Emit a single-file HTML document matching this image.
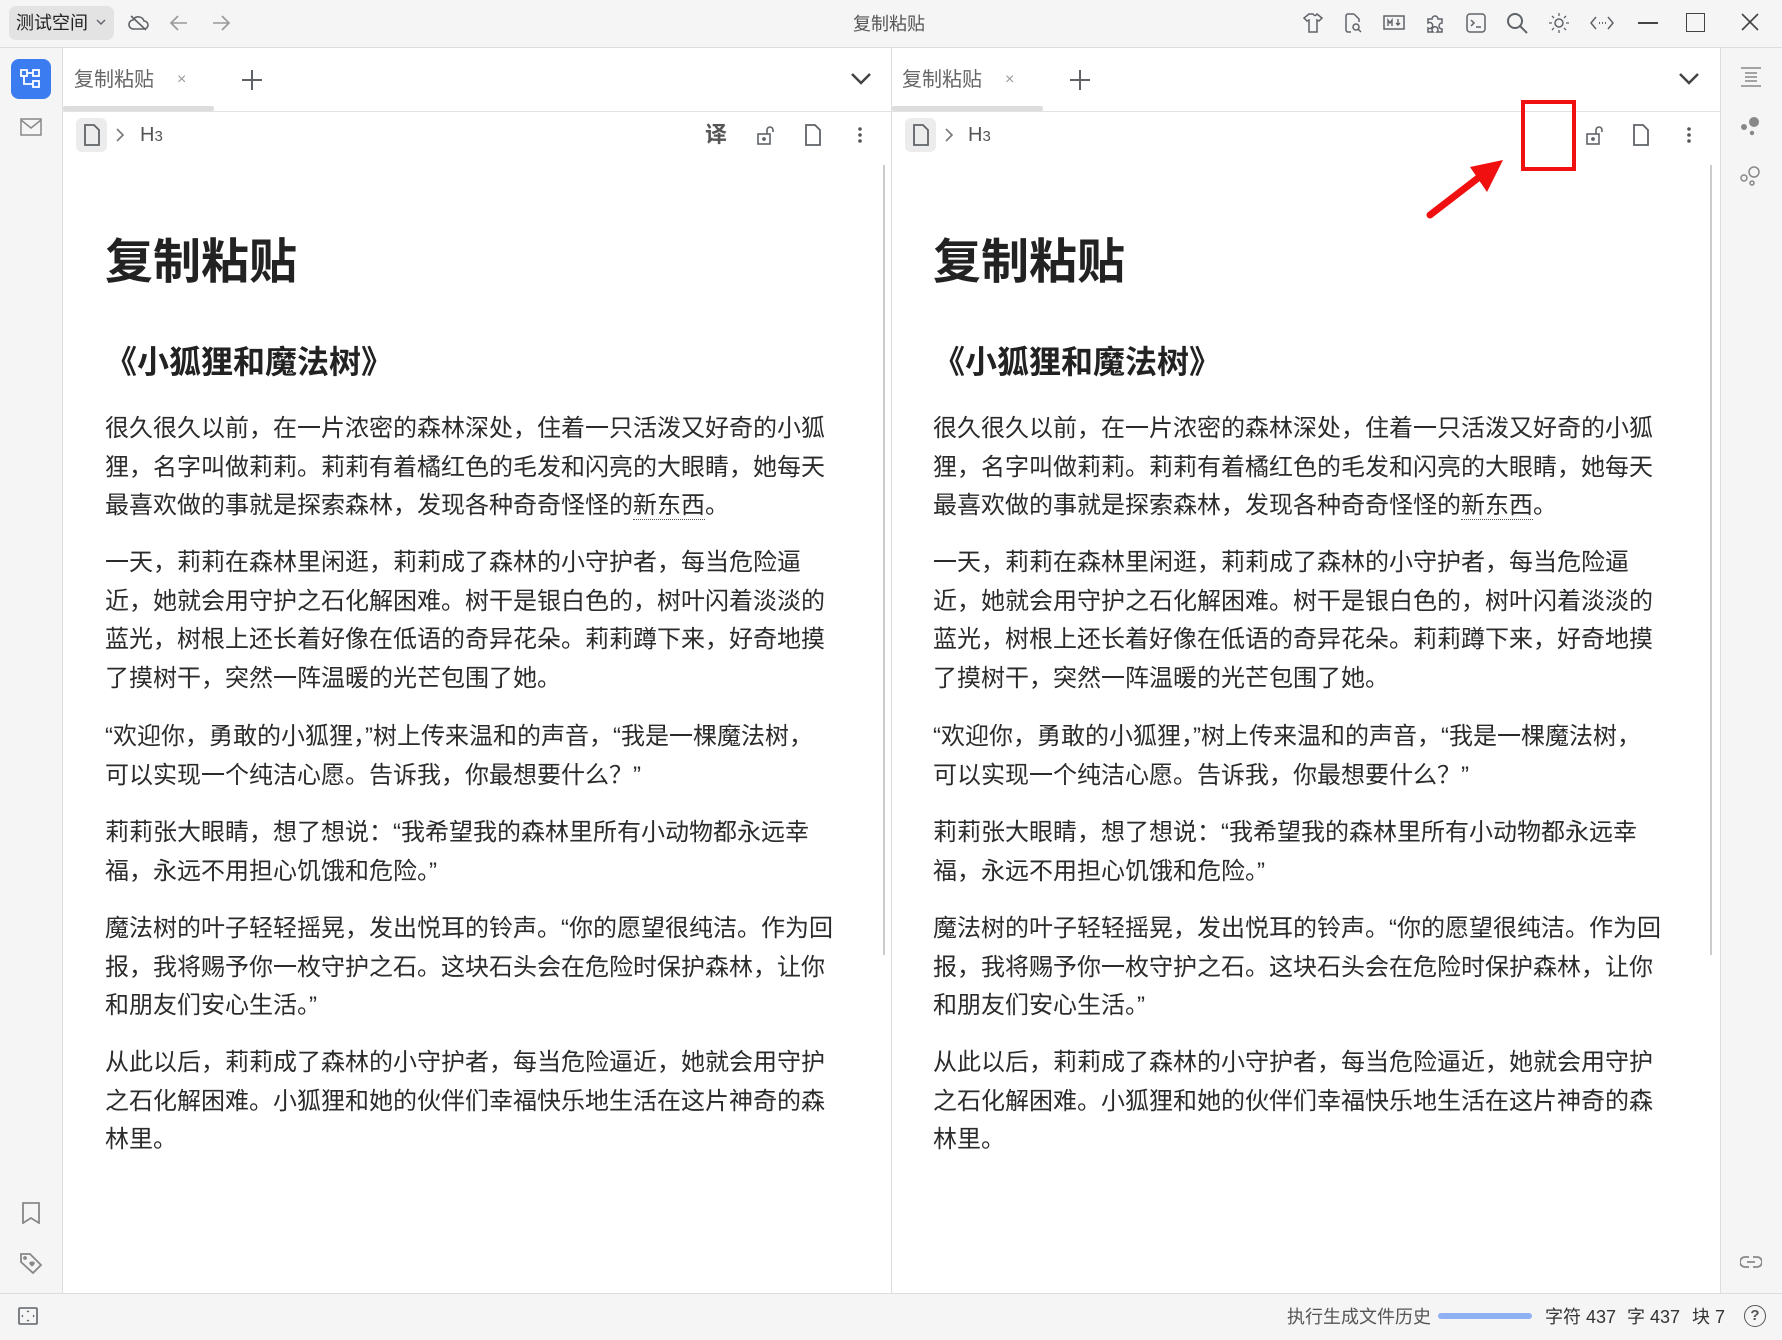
<!DOCTYPE html>
<html><head><meta charset="utf-8"><style>
*{margin:0;padding:0;box-sizing:border-box}
body{width:1782px;height:1340px;overflow:hidden;background:#f5f5f5;font-family:"Liberation Sans","Noto Sans CJK SC",sans-serif;color:#333;position:relative}
.a{position:absolute}
.ic{position:absolute;stroke:#5f6368;fill:none;stroke-width:1.8}
.pane{position:absolute;top:48px;height:1245px;background:#fff}
.txt{position:absolute;font-size:24px;line-height:38.7px;color:#2b2b2b;white-space:nowrap}
.h1{position:absolute;font-size:48px;font-weight:bold;color:#222;line-height:60px}
.h2{position:absolute;font-size:32px;font-weight:bold;color:#222;line-height:40px;letter-spacing:0}
.u{border-bottom:1.5px dotted #555}
.tab{position:absolute;font-size:20px;color:#666;line-height:24px}
.st{position:absolute;top:1305px;font-size:18px;line-height:24px;color:#333}
</style></head><body>
<!-- title bar -->
<div class="a" style="left:9px;top:6px;width:105px;height:34px;background:#e3e3e3;border-radius:7px"></div>
<div class="a" style="left:16px;top:10px;font-size:18px;line-height:26px;color:#222">测试空间</div>
<svg class="ic" style="left:95px;top:16px" width="12" height="12" viewBox="0 0 12 12"><path d="M2 4l4 4 4-4" stroke-width="1.4"/></svg>
<svg class="ic" style="left:128px;top:13px" width="22" height="20" viewBox="0 0 22 20"><path d="M6 16h10a4 4 0 0 0 0-8 6 6 0 0 0-11-1A4 4 0 0 0 6 16zM3 3l15 14" stroke-width="1.6"/></svg>
<svg class="ic" style="left:168px;top:12px;stroke:#999" width="22" height="22" viewBox="0 0 22 22"><path d="M19 11H3M10 4l-7 7 7 7" stroke-width="1.6"/></svg>
<svg class="ic" style="left:210px;top:12px;stroke:#999" width="22" height="22" viewBox="0 0 22 22"><path d="M3 11h16M12 4l7 7-7 7" stroke-width="1.6"/></svg>
<div class="a" style="left:853px;top:11px;font-size:18px;line-height:26px;color:#555">复制粘贴</div>
<svg class="ic" style="left:1302px;top:12px" width="22" height="22" viewBox="0 0 22 22"><path d="M7 2L2 6l3 3 2-1v12h8V8l2 1 3-3-5-4q-2 3-4 0z" stroke-width="1.5"/></svg>
<svg class="ic" style="left:1342px;top:12px" width="22" height="22" viewBox="0 0 22 22"><path d="M12 2H6a2 2 0 0 0-2 2v14a2 2 0 0 0 2 2h3M12 2l5 5v3" stroke-width="1.5"/><circle cx="14" cy="15" r="3" stroke-width="1.5"/><path d="M16 17l3 3" stroke-width="1.5"/></svg>
<svg class="ic" style="left:1383px;top:14px" width="22" height="18" viewBox="0 0 22 18"><rect x="1" y="2" width="20" height="13" stroke-width="1.5"/><path d="M5 12V6l2 3 2-3v6M15 5v6M13 9l2 2 2-2" stroke-width="1.4"/></svg>
<svg class="ic" style="left:1424px;top:12px" width="22" height="22" viewBox="0 0 22 22"><path d="M4 7h4a3 3 0 1 1 6 0h4v4a3 3 0 1 0 0 6v3h-5a3 3 0 1 0-4 0H4v-4a3 3 0 1 0 0-5z" stroke-width="1.5"/></svg>
<svg class="ic" style="left:1465px;top:12px" width="22" height="22" viewBox="0 0 22 22"><rect x="2" y="2" width="18" height="18" rx="3" stroke-width="1.5"/><path d="M6 8l3 3-3 3M11 15h5" stroke-width="1.5"/></svg>
<svg class="ic" style="left:1505px;top:11px" width="24" height="24" viewBox="0 0 24 24"><circle cx="10" cy="10" r="7" stroke-width="2"/><path d="M15 15l7 7" stroke-width="2"/></svg>
<svg class="ic" style="left:1548px;top:12px" width="22" height="22" viewBox="0 0 22 22"><circle cx="11" cy="11" r="4" stroke-width="1.5"/><path d="M11 1v3M11 18v3M1 11h3M18 11h3M4 4l2 2M16 16l2 2M4 18l2-2M16 6l2-2" stroke-width="1.3"/></svg>
<svg class="ic" style="left:1590px;top:14px" width="24" height="18" viewBox="0 0 24 18"><path d="M6 3L1 9l5 6M18 3l5 6-5 6" stroke-width="1.5"/><path d="M9 9h1M12 9h1M15 9h1" stroke-width="2"/></svg>
<div class="a" style="left:1638px;top:22px;width:20px;height:2px;background:#444"></div>
<div class="a" style="left:1686px;top:13px;width:19px;height:19px;border:1.6px solid #444"></div>
<svg class="ic" style="left:1741px;top:13px;stroke:#444" width="18" height="18" viewBox="0 0 18 18"><path d="M1 1l16 16M17 1L1 17" stroke-width="1.6"/></svg>
<div class="a" style="left:0;top:47px;width:1782px;height:1px;background:#ddd"></div>
<!-- left sidebar -->
<div class="a" style="left:62px;top:48px;width:1px;height:1245px;background:#ddd"></div>
<div class="a" style="left:11px;top:59px;width:40px;height:40px;background:#3b7cf0;border-radius:8px"></div>
<svg class="a" style="left:19px;top:67px" width="24" height="24" viewBox="0 0 24 24" fill="none" stroke="#fff" stroke-width="1.8"><rect x="2" y="3" width="6" height="6"/><rect x="14" y="3" width="6" height="6"/><rect x="14" y="14" width="6" height="6"/><path d="M5 9v8h9M8 6h6"/></svg>
<svg class="ic" style="left:20px;top:118px;stroke:#888" width="22" height="18" viewBox="0 0 22 18"><rect x="1" y="1" width="20" height="16" stroke-width="1.5"/><path d="M1 2l10 8 10-8" stroke-width="1.5"/></svg>
<svg class="ic" style="left:21px;top:1202px;stroke:#888" width="20" height="22" viewBox="0 0 20 22"><path d="M2 1h16v20l-8-5-8 5z" stroke-width="1.8"/></svg>
<svg class="ic" style="left:19px;top:1252px;stroke:#888" width="24" height="22" viewBox="0 0 24 22"><path d="M2 2h9l11 11-8 8L2 10z" stroke-width="1.8"/><circle cx="6" cy="6" r="1" fill="#888"/><path d="M11 12l2 2 2-2a1.2 1.2 0 0 0-2-1.5A1.2 1.2 0 0 0 11 12z" fill="#888" stroke-width="1"/></svg>
<!-- panes -->
<div class="pane" style="left:63px;width:828px"></div>
<div class="a" style="left:891px;top:48px;width:1px;height:1245px;background:#ddd"></div>
<div class="pane" style="left:892px;width:828px"></div>
<div class="a" style="left:1720px;top:48px;width:1px;height:1245px;background:#ddd"></div>
<div class="a" style="left:63px;top:111px;width:1657px;height:1px;background:#e2e2e2"></div>
<div class="a" style="left:63px;top:106px;width:151px;height:5px;background:#ddd;border-radius:2px"></div>
<div class="a" style="left:892px;top:106px;width:151px;height:5px;background:#ddd;border-radius:2px"></div>
<div class="a" style="left:883px;top:165px;width:2px;height:790px;background:#ccc"></div>
<div class="a" style="left:1710px;top:165px;width:2px;height:790px;background:#ccc"></div>
<!-- status bar -->
<div class="a" style="left:0;top:1293px;width:1782px;height:1px;background:#ddd"></div>
<svg class="ic" style="left:18px;top:1307px" width="20" height="18" viewBox="0 0 20 18"><rect x="1" y="1" width="18" height="16" rx="1" stroke-width="1.6"/><path d="M9 5l1-1 1 1M9 13l1 1 1-1M5 8l-1 1 1 1M15 8l1 1-1 1" stroke-width="1"/></svg>
<div class="a" style="left:1287px;top:1305px;font-size:18px;line-height:24px;color:#555">执行生成文件历史</div>
<div class="a" style="left:1438px;top:1313px;width:94px;height:6px;background:#8fb0f2;border-radius:3px"></div>
<div class="st" style="left:1545px">字符 437</div>
<div class="st" style="left:1627px">字 437</div>
<div class="st" style="left:1692px">块 7</div>
<div class="a" style="left:1744px;top:1305px;width:22px;height:22px;border:1.8px solid #555;border-radius:50%;font-size:15px;line-height:19px;text-align:center;color:#555;font-weight:bold">?</div>
<!-- right sidebar -->
<svg class="ic" style="left:1740px;top:66px;stroke:#888" width="22" height="22" viewBox="0 0 22 22"><path d="M1 2h20M5 7h12M5 11h12M5 15h12M1 20h20" stroke-width="1.5"/></svg>
<svg class="a" style="left:1739px;top:115px" width="22" height="22" viewBox="0 0 22 22" fill="#888"><circle cx="15" cy="7" r="5"/><circle cx="5" cy="12" r="3"/><circle cx="13" cy="18" r="2.2"/></svg>
<svg class="ic" style="left:1739px;top:165px;stroke:#888" width="22" height="22" viewBox="0 0 22 22"><circle cx="15" cy="7" r="5" stroke-width="1.5"/><circle cx="5" cy="13" r="3" stroke-width="1.5"/><circle cx="13" cy="18" r="2" stroke-width="1.5"/></svg>
<svg class="ic" style="left:1740px;top:1255px;stroke:#888" width="22" height="14" viewBox="0 0 22 14"><path d="M9 2H5a5 5 0 0 0 0 10h4M13 2h4a5 5 0 0 1 0 10h-4M7 7h8" stroke-width="1.8"/></svg>

<!-- left pane header -->
<div class="tab" style="left:74px;top:68px">复制粘贴</div>
<div class="a" style="left:177px;top:68px;font-size:16px;color:#999;line-height:24px">×</div>
<svg class="ic" style="left:241px;top:69px" width="22" height="22" viewBox="0 0 22 22"><path d="M11 1v20M1 11h20" stroke-width="2"/></svg>
<svg class="ic" style="left:850px;top:72px;stroke:#444" width="22" height="14" viewBox="0 0 22 14"><path d="M2 2l9 9 9-9" stroke-width="2.5"/></svg>
<div class="a" style="left:76px;top:118px;width:31px;height:34px;background:#ececec;border-radius:6px"></div>
<svg class="ic" style="left:83px;top:124px" width="18" height="22" viewBox="0 0 18 22"><path d="M2 1h9l5 5v15H2z" stroke-width="1.8"/></svg>
<svg class="ic" style="left:115px;top:127px;stroke:#777" width="10" height="16" viewBox="0 0 10 16"><path d="M2 2l6 6-6 6" stroke-width="1.6"/></svg>
<div class="a" style="left:140px;top:123px;font-size:20px;color:#555;line-height:24px">H<span style="font-size:15px">3</span></div>
<div class="a" style="left:705px;top:121px;font-size:22px;font-weight:bold;color:#555;line-height:28px">译</div>
<svg class="ic" style="left:756px;top:124px" width="20" height="22" viewBox="0 0 20 22"><rect x="2" y="10" width="12" height="10" stroke-width="1.6"/><path d="M11 10V6a3 3 0 0 1 6 0v2" stroke-width="1.6"/><circle cx="8" cy="15" r="1" fill="#5f6368"/></svg>
<svg class="ic" style="left:804px;top:124px" width="18" height="22" viewBox="0 0 18 22"><path d="M2 1h9l5 5v15H2z" stroke-width="1.8"/></svg>
<svg class="a" style="left:857px;top:126px" width="6" height="18" viewBox="0 0 6 18" fill="#555"><circle cx="3" cy="3" r="1.8"/><circle cx="3" cy="9" r="1.8"/><circle cx="3" cy="15" r="1.8"/></svg>

<!-- right pane header -->
<div class="tab" style="left:902px;top:68px">复制粘贴</div>
<div class="a" style="left:1005px;top:68px;font-size:16px;color:#999;line-height:24px">×</div>
<svg class="ic" style="left:1069px;top:69px" width="22" height="22" viewBox="0 0 22 22"><path d="M11 1v20M1 11h20" stroke-width="2"/></svg>
<svg class="ic" style="left:1678px;top:72px;stroke:#444" width="22" height="14" viewBox="0 0 22 14"><path d="M2 2l9 9 9-9" stroke-width="2.5"/></svg>
<div class="a" style="left:905px;top:118px;width:31px;height:34px;background:#ececec;border-radius:6px"></div>
<svg class="ic" style="left:912px;top:124px" width="18" height="22" viewBox="0 0 18 22"><path d="M2 1h9l5 5v15H2z" stroke-width="1.8"/></svg>
<svg class="ic" style="left:944px;top:127px;stroke:#777" width="10" height="16" viewBox="0 0 10 16"><path d="M2 2l6 6-6 6" stroke-width="1.6"/></svg>
<div class="a" style="left:968px;top:123px;font-size:20px;color:#555;line-height:24px">H<span style="font-size:15px">3</span></div>
<div class="a" style="left:1521px;top:100px;width:55px;height:71px;border:4px solid #f01010"></div>
<svg class="ic" style="left:1585px;top:124px" width="20" height="22" viewBox="0 0 20 22"><rect x="2" y="10" width="12" height="10" stroke-width="1.6"/><path d="M11 10V6a3 3 0 0 1 6 0v2" stroke-width="1.6"/><circle cx="8" cy="15" r="1" fill="#5f6368"/></svg>
<svg class="ic" style="left:1632px;top:124px" width="18" height="22" viewBox="0 0 18 22"><path d="M2 1h9l5 5v15H2z" stroke-width="1.8"/></svg>
<svg class="a" style="left:1686px;top:126px" width="6" height="18" viewBox="0 0 6 18" fill="#555"><circle cx="3" cy="3" r="1.8"/><circle cx="3" cy="9" r="1.8"/><circle cx="3" cy="15" r="1.8"/></svg>
<svg class="a" style="left:1420px;top:155px" width="90" height="70" viewBox="0 0 90 70"><path d="M10 60L62 20" stroke="#f01010" stroke-width="7" stroke-linecap="round"/><path d="M50 12L83 5 67 37z" fill="#f01010"/></svg>

<!-- content (left) -->
<div class="h1" style="left:105px;top:233px">复制粘贴</div>
<div class="h2" style="left:105px;top:342px">《小狐狸和魔法树》</div>
<div class="txt" style="left:105px;top:410px">很久很久以前，在一片浓密的森林深处，住着一只活泼又好奇的小狐<br>狸，名字叫做莉莉。莉莉有着橘红色的毛发和闪亮的大眼睛，她每天<br>最喜欢做的事就是探索森林，发现各种奇奇怪怪的<span class="u">新东西</span>。</div>
<div class="txt" style="left:105px;top:544px">一天，莉莉在森林里闲逛，莉莉成了森林的小守护者，每当危险逼<br>近，她就会用守护之石化解困难。树干是银白色的，树叶闪着淡淡的<br>蓝光，树根上还长着好像在低语的奇异花朵。莉莉蹲下来，好奇地摸<br>了摸树干，突然一阵温暖的光芒包围了她。</div>
<div class="txt" style="left:105px;top:718px">“欢迎你，勇敢的小狐狸，”树上传来温和的声音，“我是一棵魔法树，<br>可以实现一个纯洁心愿。告诉我，你最想要什么？”</div>
<div class="txt" style="left:105px;top:814px">莉莉张大眼睛，想了想说：“我希望我的森林里所有小动物都永远幸<br>福，永远不用担心饥饿和危险。”</div>
<div class="txt" style="left:105px;top:910px">魔法树的叶子轻轻摇晃，发出悦耳的铃声。“你的愿望很纯洁。作为回<br>报，我将赐予你一枚守护之石。这块石头会在危险时保护森林，让你<br>和朋友们安心生活。”</div>
<div class="txt" style="left:105px;top:1044px">从此以后，莉莉成了森林的小守护者，每当危险逼近，她就会用守护<br>之石化解困难。小狐狸和她的伙伴们幸福快乐地生活在这片神奇的森<br>林里。</div>

<!-- content (right) -->
<div class="h1" style="left:933px;top:233px">复制粘贴</div>
<div class="h2" style="left:933px;top:342px">《小狐狸和魔法树》</div>
<div class="txt" style="left:933px;top:410px">很久很久以前，在一片浓密的森林深处，住着一只活泼又好奇的小狐<br>狸，名字叫做莉莉。莉莉有着橘红色的毛发和闪亮的大眼睛，她每天<br>最喜欢做的事就是探索森林，发现各种奇奇怪怪的<span class="u">新东西</span>。</div>
<div class="txt" style="left:933px;top:544px">一天，莉莉在森林里闲逛，莉莉成了森林的小守护者，每当危险逼<br>近，她就会用守护之石化解困难。树干是银白色的，树叶闪着淡淡的<br>蓝光，树根上还长着好像在低语的奇异花朵。莉莉蹲下来，好奇地摸<br>了摸树干，突然一阵温暖的光芒包围了她。</div>
<div class="txt" style="left:933px;top:718px">“欢迎你，勇敢的小狐狸，”树上传来温和的声音，“我是一棵魔法树，<br>可以实现一个纯洁心愿。告诉我，你最想要什么？”</div>
<div class="txt" style="left:933px;top:814px">莉莉张大眼睛，想了想说：“我希望我的森林里所有小动物都永远幸<br>福，永远不用担心饥饿和危险。”</div>
<div class="txt" style="left:933px;top:910px">魔法树的叶子轻轻摇晃，发出悦耳的铃声。“你的愿望很纯洁。作为回<br>报，我将赐予你一枚守护之石。这块石头会在危险时保护森林，让你<br>和朋友们安心生活。”</div>
<div class="txt" style="left:933px;top:1044px">从此以后，莉莉成了森林的小守护者，每当危险逼近，她就会用守护<br>之石化解困难。小狐狸和她的伙伴们幸福快乐地生活在这片神奇的森<br>林里。</div>
</body></html>
